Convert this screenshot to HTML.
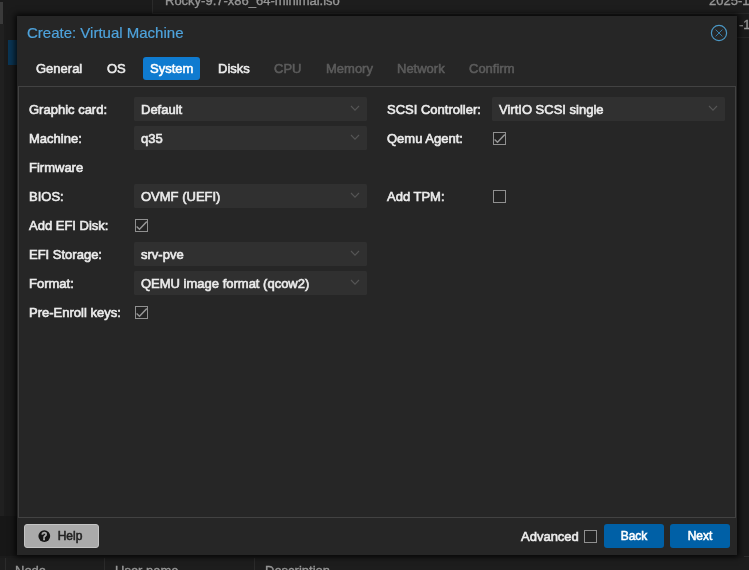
<!DOCTYPE html>
<html lang="en">
<head>
<meta charset="utf-8">
<title>Create: Virtual Machine</title>
<style>
html,body{margin:0;padding:0;}
body{width:749px;height:570px;overflow:hidden;background:#161616;font-family:"Liberation Sans",Arial,Helvetica,sans-serif;font-size:13px;color:#ececec;position:relative;}
.abs{position:absolute;}
/* background page bits */
#bg{position:absolute;left:0;top:0;width:749px;height:570px;background:#1b1b1b;overflow:hidden;}
.bgtxt{position:absolute;color:#969696;font-size:13px;line-height:15px;white-space:nowrap;-webkit-text-stroke-width:.35px;}
/* window */
#win{position:absolute;left:17px;top:16px;width:720px;height:539px;background:#262626;box-shadow:0 0 6px 2px rgba(0,0,0,.8);}
#in{position:absolute;left:1px;top:0;width:719px;height:539px;}
#title{position:absolute;left:9px;top:8px;font-size:15px;color:#4ea3dc;-webkit-text-stroke-width:.2px;white-space:nowrap;line-height:18px;}
.tab{position:absolute;top:41px;height:23px;line-height:23.6px;font-size:13px;color:#ececec;white-space:nowrap;-webkit-text-stroke-width:.55px;}
.tab.dis{color:#5c5c5c;}
.tab.act{background:#0f7bd0;border-radius:3px;padding:0 7px;color:#fff;}
#body{position:absolute;left:0;top:70px;width:716px;height:430px;border:1px solid #424242;background:#262626;}
.lbl{position:absolute;font-size:13px;line-height:24px;height:24px;padding-top:1px;-webkit-text-stroke:.6px #ececec;color:#ececec;white-space:nowrap;}
.fld{position:absolute;height:24px;line-height:26px;background:#303030;border-radius:1.5px;-webkit-text-stroke:.6px #ececec;font-size:13px;color:#ececec;box-sizing:border-box;padding-left:7px;white-space:nowrap;}
.fld svg{position:absolute;right:7px;top:8px;}
#win,#bg{will-change:transform;}
.cb{position:absolute;width:11px;height:11px;border:1px solid #909090;background:#232323;}
.cb svg{position:absolute;left:0;top:0;}
.btn{position:absolute;height:24px;line-height:24px;border-radius:3px;font-size:12px;-webkit-text-stroke-width:.55px;text-align:center;white-space:nowrap;}
.btn.blue{background:#0060a6;color:#fff;}
.btn.grey{background:#aaaaaa;color:#222;border:1px solid #c4c4c4;box-sizing:border-box;line-height:22px;}
</style>
</head>
<body>
<div id="bg">
  <div class="abs" style="left:0;top:2px;width:3px;height:22px;background:#3a3a3a;"></div>
  <div class="abs" style="left:0;top:24px;width:4px;height:492px;background:#202020;"></div>
  <div class="abs" style="left:8px;top:40px;width:9px;height:25px;background:#0a3554;"></div>
  <div class="abs" style="left:152px;top:0;width:597px;height:13px;background:#1d1d1d;border-left:1px solid #2b2b2b;"></div>
  <div class="abs" style="left:152px;top:13px;width:597px;height:1px;background:#272727;"></div>
  <div class="abs" style="left:737px;top:37px;width:12px;height:1px;background:#272727;"></div>
  <div class="abs" style="left:744px;top:556px;width:5px;height:1px;background:#2c2c2c;"></div>
  <div class="abs" style="left:0;top:516px;width:18px;height:40px;background:#171717;border-top-right-radius:3px;"></div>
  <div class="bgtxt" style="left:165px;top:-7px;">Rocky-9.7-x86_64-minimal.iso</div>
  <div class="bgtxt" style="left:709px;top:-7px;">2025-1</div>
  <div class="bgtxt" style="left:739px;top:17px;">-1</div>
  <div class="abs" style="left:0;top:558px;width:749px;height:12px;background:#1d1d1d;"></div>
  <div class="abs" style="left:5px;top:558px;width:1px;height:12px;background:#2b2b2b;"></div>
  <div class="abs" style="left:104px;top:558px;width:1px;height:12px;background:#2b2b2b;"></div>
  <div class="abs" style="left:254px;top:558px;width:1px;height:12px;background:#2b2b2b;"></div>
  <div class="bgtxt" style="left:15px;top:563px;">Node</div>
  <div class="bgtxt" style="left:115px;top:563px;">User name</div>
  <div class="bgtxt" style="left:265px;top:563px;">Description</div>
</div>

<div id="win"><div id="in">
  <div id="title">Create: Virtual Machine</div>
  <svg class="abs" style="left:692px;top:8px;" width="18" height="18" viewBox="0 0 18 18"><circle cx="9" cy="9" r="7.6" fill="none" stroke="#4b97c4" stroke-width="1.2"/><path d="M5.6 5.6 L12.4 12.4 M12.4 5.6 L5.6 12.4" stroke="#3a86b4" stroke-width="0.9" fill="none"/></svg>

  <div class="tab" style="left:18px;">General</div>
  <div class="tab" style="left:89px;">OS</div>
  <div class="tab act" style="left:125px;">System</div>
  <div class="tab" style="left:200px;">Disks</div>
  <div class="tab dis" style="left:256px;">CPU</div>
  <div class="tab dis" style="left:308px;">Memory</div>
  <div class="tab dis" style="left:379px;">Network</div>
  <div class="tab dis" style="left:451px;">Confirm</div>

  <div id="body">
    <!-- left column -->
    <div class="lbl" style="left:10px;top:10px;">Graphic card:</div>
    <div class="fld" style="left:115px;top:10px;width:233px;">Default<svg width="10" height="7" viewBox="0 0 10 7"><path d="M1 1 L5 5.2 L9 1" fill="none" stroke="#565656" stroke-width="1.1"/></svg></div>

    <div class="lbl" style="left:10px;top:39px;">Machine:</div>
    <div class="fld" style="left:115px;top:39px;width:233px;">q35<svg width="10" height="7" viewBox="0 0 10 7"><path d="M1 1 L5 5.2 L9 1" fill="none" stroke="#565656" stroke-width="1.1"/></svg></div>

    <div class="lbl" style="left:10px;top:68px;">Firmware</div>

    <div class="lbl" style="left:10px;top:97px;">BIOS:</div>
    <div class="fld" style="left:115px;top:97px;width:233px;">OVMF (UEFI)<svg width="10" height="7" viewBox="0 0 10 7"><path d="M1 1 L5 5.2 L9 1" fill="none" stroke="#565656" stroke-width="1.1"/></svg></div>

    <div class="lbl" style="left:10px;top:126px;">Add EFI Disk:</div>
    <div class="cb" style="left:116px;top:132px;"><svg width="11" height="11" viewBox="0 0 11 11"><path d="M0.6 6.4 L3.5 9.3 L10.8 1.6" fill="none" stroke="#969696" stroke-width="1.4"/></svg></div>

    <div class="lbl" style="left:10px;top:155px;">EFI Storage:</div>
    <div class="fld" style="left:115px;top:155px;width:233px;">srv-pve<svg width="10" height="7" viewBox="0 0 10 7"><path d="M1 1 L5 5.2 L9 1" fill="none" stroke="#565656" stroke-width="1.1"/></svg></div>

    <div class="lbl" style="left:10px;top:184px;">Format:</div>
    <div class="fld" style="left:115px;top:184px;width:233px;">QEMU image format (qcow2)<svg width="10" height="7" viewBox="0 0 10 7"><path d="M1 1 L5 5.2 L9 1" fill="none" stroke="#565656" stroke-width="1.1"/></svg></div>

    <div class="lbl" style="left:10px;top:213px;">Pre-Enroll keys:</div>
    <div class="cb" style="left:116px;top:219px;"><svg width="11" height="11" viewBox="0 0 11 11"><path d="M0.6 6.4 L3.5 9.3 L10.8 1.6" fill="none" stroke="#969696" stroke-width="1.4"/></svg></div>

    <!-- right column -->
    <div class="lbl" style="left:368px;top:10px;">SCSI Controller:</div>
    <div class="fld" style="left:473px;top:10px;width:233px;">VirtIO SCSI single<svg width="10" height="7" viewBox="0 0 10 7"><path d="M1 1 L5 5.2 L9 1" fill="none" stroke="#565656" stroke-width="1.1"/></svg></div>

    <div class="lbl" style="left:368px;top:39px;">Qemu Agent:</div>
    <div class="cb" style="left:474px;top:45px;"><svg width="11" height="11" viewBox="0 0 11 11"><path d="M0.6 6.4 L3.5 9.3 L10.8 1.6" fill="none" stroke="#969696" stroke-width="1.4"/></svg></div>

    <div class="lbl" style="left:368px;top:97px;">Add TPM:</div>
    <div class="cb" style="left:474px;top:103px;"></div>
  </div>

  <!-- bottom toolbar -->
  <div class="btn grey" style="left:6px;top:508px;width:75px;"><svg class="abs" style="left:13px;top:5px;" width="13" height="13" viewBox="0 0 13 13"><circle cx="6.3" cy="6.1" r="5.9" fill="#151515"/><text x="6.3" y="9.7" font-family="Liberation Sans, sans-serif" font-size="10" font-weight="bold" text-anchor="middle" fill="#b4b4b4" stroke="#b4b4b4" stroke-width=".4">?</text></svg><span style="padding-left:17px;">Help</span></div>
  <div class="lbl" style="left:503px;top:508px;">Advanced</div>
  <div class="cb" style="left:566px;top:514px;"></div>
  <div class="btn blue" style="left:586px;top:508px;width:60px;">Back</div>
  <div class="btn blue" style="left:652px;top:508px;width:60px;">Next</div>
</div></div>
</body>
</html>
